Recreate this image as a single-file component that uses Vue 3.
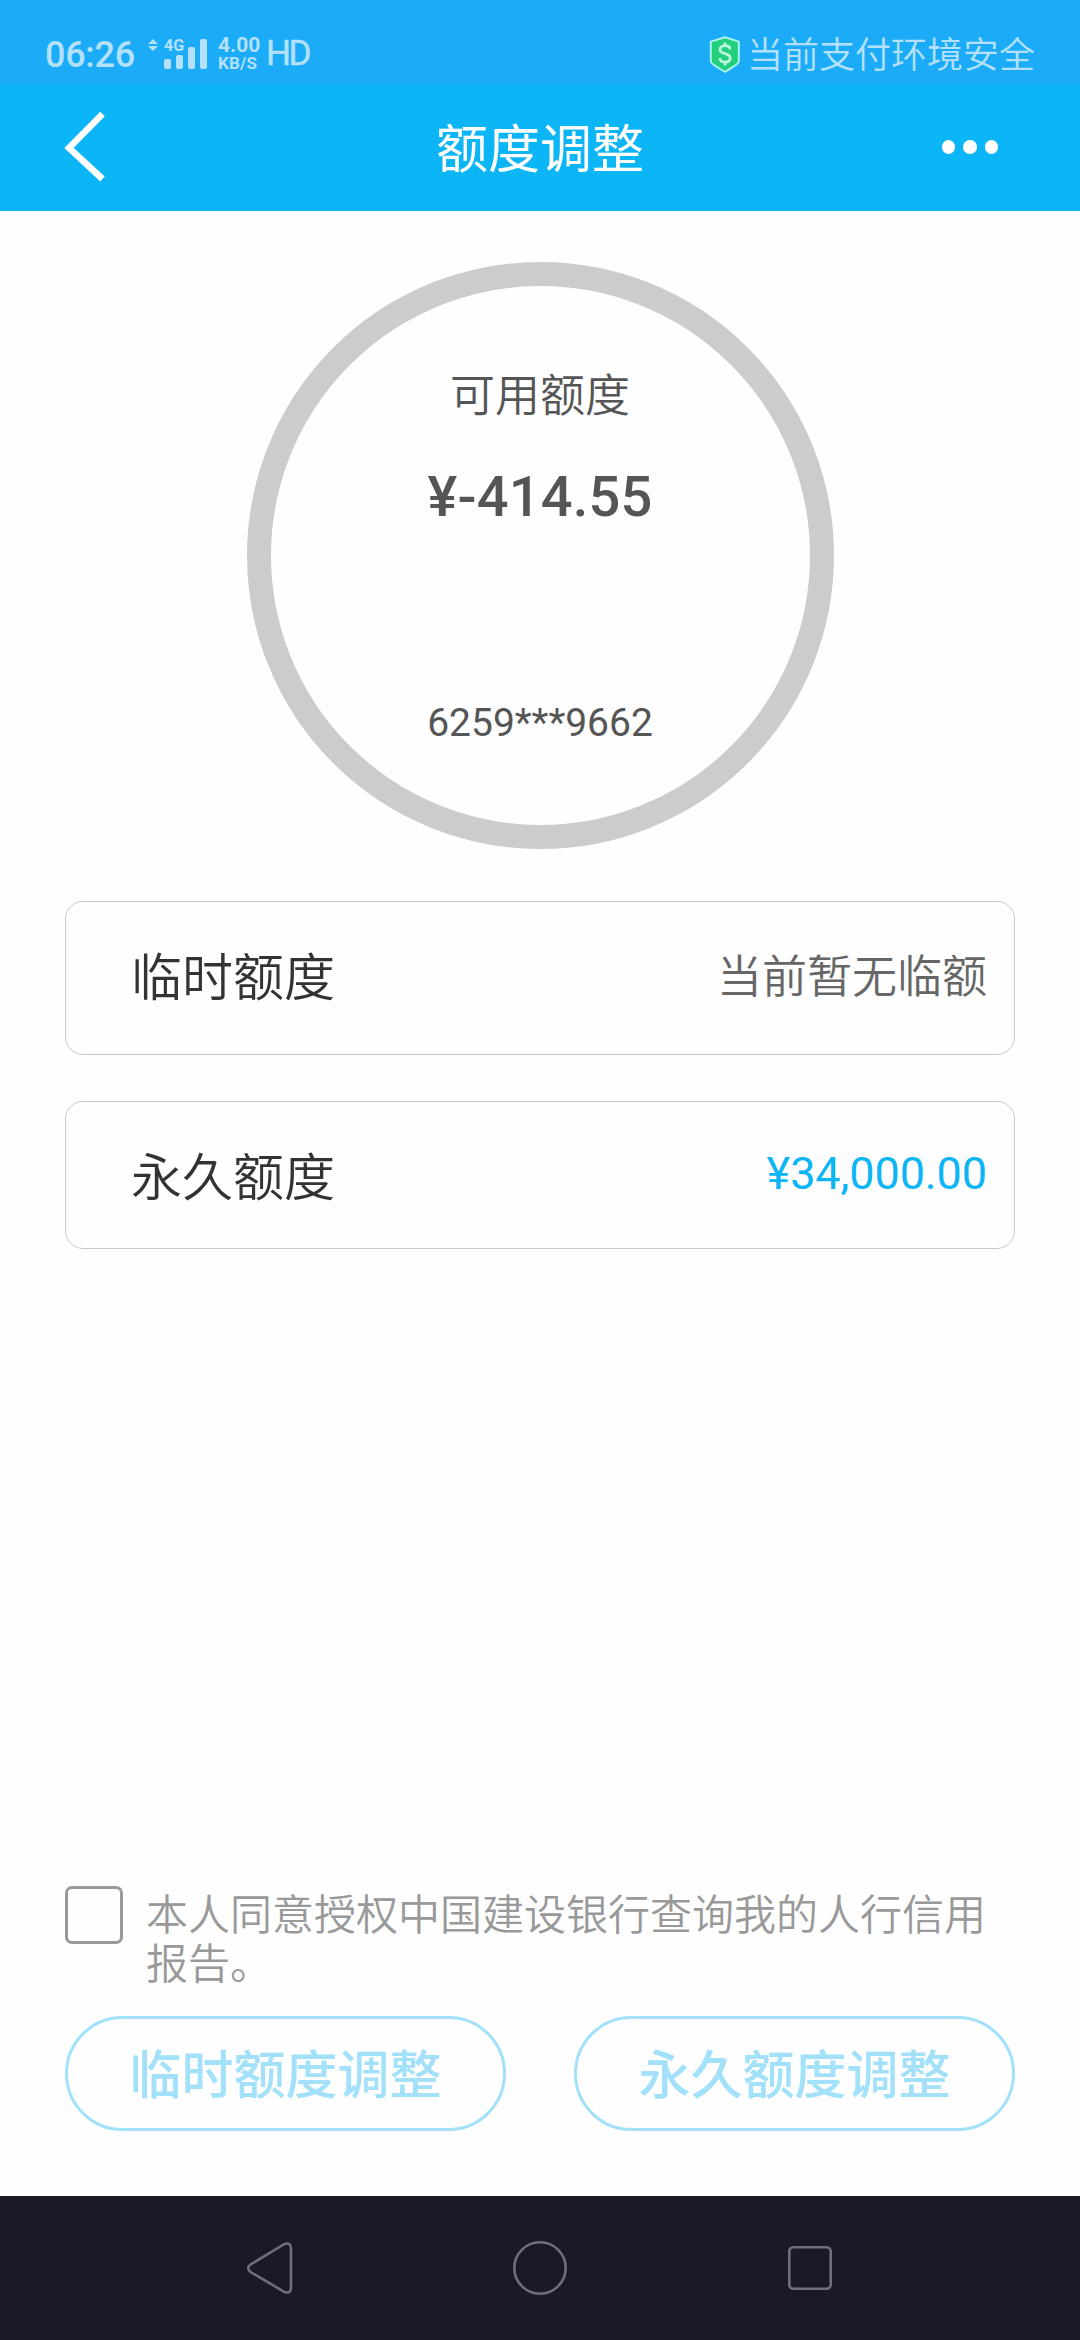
<script setup>
const bars = [10, 14, 22, 30]
const cards = [
  { label: '临时额度', value: '当前暂无临额', kind: 'temporary' },
  { label: '永久额度', value: '¥34,000.00', kind: 'permanent' },
]
const actions = ['临时额度调整', '永久额度调整']
</script>

<template>
  <div class="screen">
    <div class="status">
      <span class="clock">06:26</span>
      <svg class="updown" width="10" height="12" viewBox="0 0 10 12"><path d="M0 5 5 0 10 5ZM0 7H10L5 12Z" fill="currentColor" /></svg>
      <div class="signal">
        <span class="net">4G</span>
        <div class="bars"><i v-for="b in bars" :key="b" :style="{ height: b + 'px' }"></i></div>
      </div>
      <div class="speed"><span class="rate">4.00</span><span class="unit">KB/S</span></div>
      <span class="hd">HD</span>
      <div class="secure">
        <svg width="32" height="37" viewBox="0 0 32 37">
          <path d="M16 1.2 29.8 5.6V25.5C29.8 28 20 33.5 16 35.8 12 33.5 1.8 28 1.8 25.5V5.6Z" fill="#22d07c" stroke="#a9f3ea" stroke-width="2" stroke-linejoin="round" />
          <path d="M21 13.5C21 10.8 18.8 9.6 16 9.6S10.900 11 10.900 13.500C10.900 19 21.200 16.300 21.200 22 21.200 24.800 18.800 26.200 16 26.200S10.700 24.800 10.700 22M16 6.500V9.600M16 26.200V29.500" fill="none" stroke="#baf5dc" stroke-width="2.800" />
        </svg>
        <span>当前支付环境安全</span>
      </div>
    </div>

    <header class="header">
      <svg class="back" width="44" height="74" viewBox="0 0 44 74"><path d="M38.500 4 5 38 38.500 69" fill="none" stroke="#fff" stroke-width="6.500" /></svg>
      <h1>额度调整</h1>
      <div class="more"><i></i><i></i><i></i></div>
    </header>

    <main class="content">
      <section class="ring">
        <span class="ring-title">可用额度</span>
        <strong>¥-414.55</strong>
        <span class="card-no">6259***9662</span>
      </section>

      <section v-for="c in cards" :key="c.kind" class="card" :class="c.kind">
        <span class="label">{{ c.label }}</span>
        <span class="value">{{ c.value }}</span>
      </section>

      <label class="agree">
        <span class="box"></span>
        <span class="terms">本人同意授权中国建设银行查询我的人行信用报告。</span>
      </label>

      <div class="actions">
        <button v-for="a in actions" :key="a" disabled>{{ a }}</button>
      </div>
    </main>

    <nav class="nav">
      <svg width="54" height="54" viewBox="0 0 54 54"><path d="M41.500 3 7.500 23.500Q3 27 7.500 31L41.500 51Q48 53 48 46.500V7.500Q48 1 41.500 3Z" /></svg>
      <svg width="54" height="54" viewBox="0 0 54 54"><circle cx="27" cy="27" r="25.700" /></svg>
      <svg width="54" height="54" viewBox="0 0 54 54"><rect x="6.300" y="6.300" width="41.400" height="41.400" rx="4" /></svg>
    </nav>
  </div>
</template>

<style>
body { margin: 0; background: #fefefe; }
</style>

<style scoped>
.screen {
  width: 1080px;
  height: 2340px;
  display: flex;
  flex-direction: column;
  overflow: hidden;
  background: #fefefe;
  font-family: Roboto, "Noto Sans CJK SC", sans-serif;
}
.status {
  height: 84px;
  box-sizing: border-box;
  padding: 0 45px;
  display: flex;
  align-items: flex-start;
  background: #1cabf7;
  color: #b3e1fc;
}
.clock { margin-top: 34px; width: 90px; font-size: 36px; line-height: 42px; font-weight: 500; letter-spacing: -0.3px; }
.updown { margin: 39px 0 0 13px; }
.signal { width: 44px; margin: 37px 0 0 6px; position: relative; }
.net { position: absolute; left: 0; top: 1px; font-size: 16px; line-height: 16px; font-weight: 700; }
.bars { display: flex; align-items: flex-end; gap: 5px; height: 32px; }
.bars i { width: 7px; border-radius: 2px; background: currentColor; }
.speed { width: 46px; margin: 36px 0 0 10px; display: flex; flex-direction: column; font-weight: 700; white-space: nowrap; }
.rate { font-size: 21px; line-height: 18px; }
.unit { font-size: 17px; line-height: 18px; letter-spacing: 0.2px; }
.hd { margin: 33px 0 0 2px; font-size: 35px; line-height: 42px; letter-spacing: -2.500px; -webkit-text-stroke: 0.5px currentColor; }
.secure { margin: 37px 0 0 auto; display: flex; align-items: flex-start; gap: 6px; font-size: 36px; line-height: 38px; font-weight: 350; white-space: nowrap; }
.secure svg { margin: -1px 0 0 0; }
.header {
  height: 127px;
  box-sizing: border-box;
  padding: 0 82px 0 64px;
  display: grid;
  grid-template-columns: 1fr auto 1fr;
  background: #0cb5f5;
  color: #fff;
}
.back { margin-top: 26px; }
h1 { margin: 37px -18px 0 0; font-size: 52px; line-height: 60px; font-weight: 400; }
.more { justify-self: end; margin-top: 56px; display: flex; gap: 8px; }
.more i { width: 13.500px; height: 13.500px; border-radius: 50%; background: #fff; }
.content { flex: 1; padding: 51px 65px 0; display: flex; flex-direction: column; }
.ring {
  align-self: center;
  box-sizing: border-box;
  width: 587px;
  height: 587px;
  border: 24px solid #ccc;
  border-radius: 50%;
  display: flex;
  flex-direction: column;
  align-items: center;
  color: #555;
}
.ring-title { margin-top: 83px; font-size: 45px; line-height: 56px; font-weight: 350; }
.ring strong { margin-top: 39px; font-size: 56px; line-height: 66px; font-weight: 500; letter-spacing: 0.2px; }
.card-no { margin-top: 170px; font-size: 39px; line-height: 46px; }
.card {
  box-sizing: border-box;
  display: flex;
  justify-content: space-between;
  align-items: flex-start;
  padding: 0 27px 0 65px;
  border: 1px solid #c8c8c8;
  border-radius: 18px;
}
.temporary { height: 154px; margin-top: 52px; }
.permanent { height: 148px; margin-top: 46px; }
.label { margin-top: 47px; font-size: 51px; line-height: 60px; font-weight: 350; color: #333; }
.value { margin-top: 48px; font-size: 45px; line-height: 56px; font-weight: 350; color: #666; }
.permanent .value { margin-top: 44px; font-weight: 400; color: #0cb5f5; letter-spacing: -0.1px; }
.agree { margin-top: 637px; display: flex; align-items: flex-start; gap: 23px; }
.box { flex: none; box-sizing: border-box; width: 58px; height: 58px; border: 3px solid #999; border-radius: 7px; }
.terms { margin: 5px 0 -5px; font-size: 42px; line-height: 49px; font-weight: 350; color: #999; }
.actions { margin-top: 32px; display: flex; justify-content: space-between; }
button {
  box-sizing: border-box;
  width: 441px;
  height: 115px;
  padding: 7px 0 0;
  border: 3px solid #a2e1f9;
  border-radius: 58px;
  background: transparent;
  color: #a2e1f9;
  font: 500 52px/60px Roboto, "Noto Sans CJK SC", sans-serif;
}
.nav { height: 144px; display: flex; justify-content: center; align-items: center; gap: 216px; background: #1a1a27; }
.nav svg { fill: none; stroke: #706e7c; stroke-width: 2.600; }
</style>
